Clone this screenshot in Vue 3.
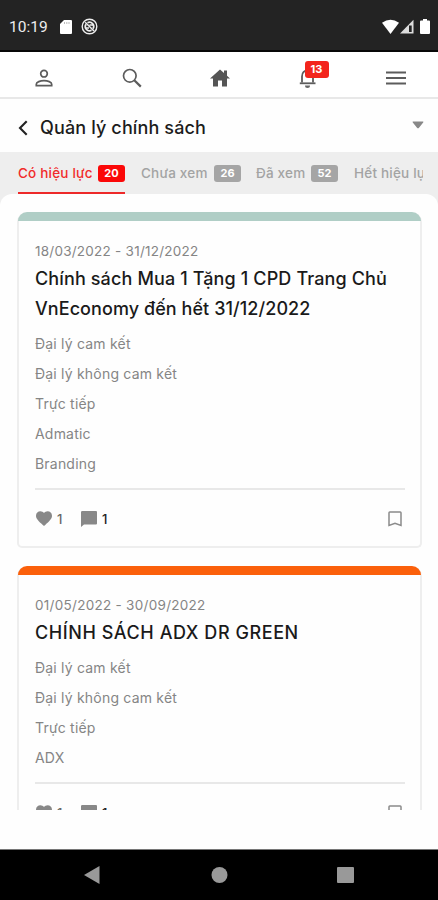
<script setup>
const tabs = [
  { label: 'Có hiệu lực', count: 20, active: true, cls: 't1' },
  { label: 'Chưa xem', count: 26, cls: 't2' },
  { label: 'Đã xem', count: 52, cls: 't3' },
  { label: 'Hết hiệu lực', count: 0, cls: 't4' },
]
const cards = [
  {
    tone: 'mint',
    date: '18/03/2022 - 31/12/2022',
    title: ['Chính sách Mua 1 Tặng 1 CPD Trang Chủ', 'VnEconomy đến hết 31/12/2022'],
    tags: ['Đại lý cam kết', 'Đại lý không cam kết', 'Trực tiếp', 'Admatic', 'Branding'],
  },
  {
    tone: 'orange',
    date: '01/05/2022 - 30/09/2022',
    title: ['CHÍNH SÁCH ADX DR GREEN'],
    tags: ['Đại lý cam kết', 'Đại lý không cam kết', 'Trực tiếp', 'ADX'],
  },
]
</script>

<template>
  <div class="phone">
    <header class="status">
      <span class="clock">10:19</span>
      <svg class="sd" width="12" height="14" viewBox="0 0 12 14"><path d="M4 0h7a1 1 0 0 1 1 1v12a1 1 0 0 1-1 1H1a1 1 0 0 1-1-1V4z" fill="#fff" /><path d="M4.5 2v2M6.8 2v2M9 2v2" stroke="#aaa" stroke-width=".8" /></svg>
      <svg class="sync" width="17" height="17" viewBox="0 0 17 17" fill="none" stroke="#eee"><circle cx="8.5" cy="8.5" r="7.3" stroke-width="1.4" /><path d="M5 6.200a4.200 4.200 0 0 0 5.500 6M12 10.800a4.200 4.200 0 0 0-5.500-6" stroke-width="1.700" /><path d="M4.200 4.200l8.800 8.800M8.500 7h3.500M5 10h3" stroke-width="1.500" /></svg>
      <svg class="signals" width="49" height="16" viewBox="0 0 49 16">
        <path d="M0 3.8Q8.500-2.500 17 3.800L8.500 15z" fill="#fff" />
        <path d="M31.500 .8V14.500H18z" fill="#ddd" /><path d="M27 6.500h2.700v6.500H27z" fill="#222" />
        <path d="M41 1.500V0h4v1.500h2a1 1 0 0 1 1 1V14a1 1 0 0 1-1 1h-8a1 1 0 0 1-1-1V2.500a1 1 0 0 1 1-1z" fill="#fff" />
      </svg>
    </header>

    <nav class="toolbar">
      <span class="slot"><svg width="18" height="18" viewBox="0 0 18 18" fill="none" stroke="#5c5c5c" stroke-width="1.7"><circle cx="9" cy="4.700" r="3.300" /><path d="M1.300 16.700V15.200c0-2.200 4-3.500 7.700-3.500s7.700 1.300 7.700 3.500v1.500z" /></svg></span>
      <span class="slot"><svg width="20" height="20" viewBox="0 0 20 20" fill="none" stroke="#5c5c5c" stroke-width="1.700"><circle cx="7.800" cy="7.800" r="6.300" /><path d="M12.300 12.300l6.500 6.300" stroke-width="2.200" /></svg></span>
      <span class="slot"><svg width="20" height="18" viewBox="0 0 20 18"><path d="M10 .5l4 3.600V1.500h3v5.300l3 2.700h-3V17.500h-5V11.500H8v6H3v-8H0z" fill="#555" /></svg></span>
      <span class="slot bell">
        <svg width="18" height="21" viewBox="0 0 18 21"><path d="M3 15.500V9.500C3 5.500 5.500 3.500 8.500 3.500s5.500 2 5.500 6v6" fill="none" stroke="#5c5c5c" stroke-width="1.800" /><path d="M.8 16.300h15.700" stroke="#5c5c5c" stroke-width="1.800" /><path d="M6 18.500h5a2.500 2.500 0 0 1-5 0z" fill="#666" /></svg>
        <b class="alert">13</b>
      </span>
      <span class="slot"><svg width="20" height="14" viewBox="0 0 20 14"><path d="M0 1.500h20M0 7h20M0 12.500h20" stroke="#5c5c5c" stroke-width="2" /></svg></span>
    </nav>

    <div class="heading">
      <svg width="10" height="16" viewBox="0 0 10 16"><path d="M8.700 1.300L2 8l6.700 6.700" fill="none" stroke="#222" stroke-width="2.100" /></svg>
      <h1>Quản lý chính sách</h1>
      <svg class="caret" width="12" height="8" viewBox="0 0 12 8"><path d="M1.200 .5h9.600q1.200 0 .4 1L7 6.800q-1 1-2 0L.8 1.500Q0 .5 1.200 .5z" fill="#888" /></svg>
    </div>

    <div class="tabstrip">
      <div class="tabs">
        <div v-for="t in tabs" :key="t.label" class="tab" :class="[t.cls, { active: t.active }]">
          <span class="name">{{ t.label }}</span><b v-if="t.count">{{ t.count }}</b>
        </div>
      </div>
    </div>

    <main class="sheet">
      <article v-for="c in cards" :key="c.title[0]" class="card" :class="c.tone">
        <div class="band"></div>
        <div class="body">
          <div class="date">{{ c.date }}</div>
          <h2><span v-for="(l, i) in c.title" :key="l" :class="'l' + i">{{ l }}</span></h2>
          <ul><li v-for="t in c.tags" :key="t">{{ t }}</li></ul>
          <footer>
            <svg width="16" height="15" viewBox="0 0 16 15"><path d="M8 15L6.800 13.900C2.700 10.200 0 7.800 0 4.700 0 2.100 2 .3 4.400.3 5.800.3 7.200 1 8 2 8.800 1 10.200.3 11.600.3 14 .3 16 2.100 16 4.700c0 3.100-2.700 5.500-6.800 9.200z" fill="#888" /></svg>
            <span class="likes">1</span>
            <svg width="16" height="16" viewBox="0 0 16 16"><path d="M1.200 0H15a1 1 0 0 1 1 1v11.500a1 1 0 0 1-1 1H3L0 16V1.200Q0 0 1.200 0z" fill="#888" /></svg>
            <span class="comments">1</span>
            <svg class="mark" width="14" height="16" viewBox="0 0 14 16"><path d="M1.800 1h10.400q.8 0 .8.800v12.700L7 12.200 1 14.500V1.800Q1 1 1.800 1z" fill="none" stroke="#8b8b8b" stroke-width="1.500" /></svg>
          </footer>
        </div>
      </article>
    </main>

    <div class="keys">
      <svg width="270" height="18" viewBox="0 0 270 18" fill="#999"><path d="M0 9L15.500 0v18z" /><circle cx="135.500" cy="9" r="8" /><rect x="253" y="1" width="17" height="16" rx="1" /></svg>
    </div>
  </div>
</template>

<style>
body { background: #fff; }
</style>

<style scoped>
* { box-sizing: border-box; }
svg { display: block; flex: none; }
.phone { width: 438px; height: 900px; overflow: hidden; display: flex; flex-direction: column; background: #fefefe; font-family: Inter, "Liberation Sans", sans-serif; }
.status { height: 52px; flex: none; background: #232323; border-bottom: 2px solid #080808; display: flex; align-items: center; padding: 3px 7px 0 9px; }
.clock { width: 38px; color: #eee; font: 400 15.500px/20px Roboto, sans-serif; white-space: nowrap; }
.sd { margin-left: 13px; }
.sync { margin-left: 9px; }
.signals { margin-left: auto; }
.toolbar { height: 47px; flex: none; border-bottom: 2px solid #e8e8e8; display: grid; grid-template-columns: repeat(5, 88px); justify-content: center; background: #fff; padding: 6px 0 0 1px; }
.slot { display: flex; align-items: center; justify-content: center; position: relative; }
.alert { position: absolute; left: 41px; top: 3px; width: 24px; height: 17px; border-radius: 3px; background: #f3251c; color: #fff; font-size: 11px; line-height: 17px; text-align: center; }
.heading { height: 53px; flex: none; display: flex; align-items: center; padding: 5px 14px 0 18px; }
h1 { margin: 0 0 0 12px; font-size: 18px; font-weight: 500; color: #1c1c1c; line-height: 24px; letter-spacing: .13px; white-space: nowrap; }
.caret { margin: -6px 0 0 auto; }
.tabstrip { height: 54px; margin-bottom: -12px; flex: none; background: #eee; padding: 0 15px 0 18px; }
.tabs { height: 42px; display: flex; overflow: hidden; }
.tab { display: flex; align-items: center; flex: none; height: 42px; padding-top: 2px; font-size: 13.500px; letter-spacing: .2px; color: #a3a3a3; white-space: nowrap; border-bottom: 2px solid transparent; font-weight: 500; }
.tab b { margin-left: auto; width: 27px; height: 17px; border-radius: 3px; background: #a5a5a5; color: #fff; font-size: 11px; line-height: 17px; letter-spacing: 0; text-align: center; }
.t1 { width: 107px; margin-right: 16px; }
.t2 { width: 100px; margin-right: 15px; }
.t3 { width: 82px; margin-right: 16px; }
.t1 .name { padding-left: 0; }
.active { color: #f12b2b; border-color: #ed2929; }
.tab.active b { background: #fb0808; }
.sheet { height: 616px; flex: none; background: #fefefe; border-radius: 12px 12px 0 0; overflow: hidden; padding: 18px 16px 0 17px; }
.card { border: 2px solid #eee; border-top: 0; border-radius: 10px 10px 5px 5px; height: 336px; margin-bottom: 18px; }
.band { height: 9px; margin: 0 -1px; border-radius: 9px 9px 0 0; background: #b0cec6; }
.orange .band { background: #fb600b; }
.body { padding: 20px 15px 0 16px; }
.date { font-size: 13.500px; line-height: 20px; color: #858585; letter-spacing: .24px; white-space: nowrap; }
h2 { margin: 3px 0 5px; font-size: 18px; line-height: 30px; font-weight: 500; color: #1a1a1a; letter-spacing: .13px; }
h2 span { display: block; white-space: nowrap; }
h2 .l1 { letter-spacing: .07px; }
.orange h2 { letter-spacing: .57px; }
.orange .date { letter-spacing: .28px; }
ul { list-style: none; margin: 0; padding: 0; }
li { font-size: 14px; line-height: 29.900px; color: #858585; letter-spacing: .2px; white-space: nowrap; }
footer { margin-top: 9px; border-top: 2px solid #e8e8e8; height: 60px; display: flex; align-items: center; padding: 0 3px 0 1px; font-size: 13px; font-weight: 500; }
.likes { width: 8px; margin: 0 16px 0 5px; color: #666; }
.comments { margin-left: 5px; color: #222; }
.mark { margin-left: auto; }
.keys { margin-top: auto; height: 51px; flex: none; border-top: 1px solid #777; background: #000; padding: 16px 0 0 84px; }
</style>
